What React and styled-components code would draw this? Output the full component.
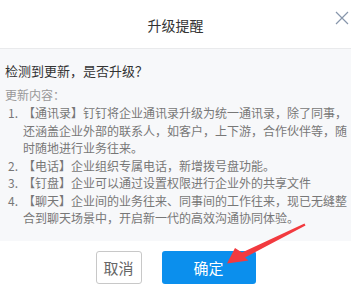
import styled, { createGlobalStyle } from 'styled-components';

const GlobalStyle = createGlobalStyle`
  html, body {
    margin: 0;
    padding: 0;
    background: #ffffff;
  }
  body {
    font-family: "Noto Sans CJK SC", "Liberation Sans", sans-serif;
  }
`;

const items = [
  '【通讯录】钉钉将企业通讯录升级为统一通讯录，除了同事，还涵盖企业外部的联系人，如客户，上下游，合作伙伴等，随时随地进行业务往来。',
  '【电话】企业组织专属电话，新增拨号盘功能。',
  '【钉盘】企业可以通过设置权限进行企业外的共享文件',
  '【聊天】企业间的业务往来、同事间的工作往来，现已无缝整合到聊天场景中，开启新一代的高效沟通协同体验。',
];

export default function App() {
  return (
    <>
      <GlobalStyle />
      <Dialog>
        <Header>
          <span />
          <Title>升级提醒</Title>
          <CloseButton aria-label="关闭">
            <svg width="14" height="14" viewBox="0 0 14 14">
              <path d="M1 1 L13 13 M13 1 L1 13" stroke="#8796ab" strokeWidth="1.2" fill="none" />
            </svg>
          </CloseButton>
        </Header>

        <Body>
          <Question>检测到更新，是否升级？</Question>
          <Label>更新内容：</Label>
          <List>
            {items.map((text, i) => (
              <Item key={i}>
                <Num>{i + 1}.</Num>
                <ItemText>{text}</ItemText>
              </Item>
            ))}
          </List>
        </Body>

        <Footer>
          <CancelButton>取消</CancelButton>
          <ConfirmButton>确定</ConfirmButton>
        </Footer>

        {/* 红色标注箭头 */}
        <Arrow width="351" height="292" viewBox="0 0 351 292">
          <polygon
            points="227,263.5 235,248 242,252.5 304.5,223.5 305.5,225.5 245,257.5 248.5,260.5"
            fill="#f23a3f"
          />
        </Arrow>
      </Dialog>
    </>
  );
}

const Dialog = styled.div`
  position: relative;
  width: 351px;
  height: 292px;
  display: flex;
  flex-direction: column;
  background: #fff;
  overflow: hidden;
`;

const Header = styled.div`
  height: 48px;
  border-bottom: 1px solid #e9eaec;
  display: grid;
  grid-template-columns: 1fr auto 1fr;
  align-items: center;
`;

const Title = styled.div`
  font-size: 14px;
  color: #333;
  line-height: 20px;
  margin-top: 2px;
`;

const CloseButton = styled.div`
  justify-self: end;
  align-self: start;
  margin-top: 11px;
  margin-right: 2px;
  width: 14px;
  height: 14px;
  display: flex;
`;

const Body = styled.div`
  background: #f7f8fa;
  height: 192px;
  box-sizing: border-box;
  padding: 11px 0 0 5px;
`;

const Question = styled.div`
  font-size: 13px;
  line-height: 22px;
  color: #333;
`;

const Label = styled.div`
  margin-top: 4px;
  font-size: 12px;
  line-height: 18px;
  color: #999;
`;

const List = styled.div`
  display: flex;
  flex-direction: column;
`;

const Item = styled.div`
  display: flex;
  font-size: 12px;
  line-height: 17.5px;
  color: #777;
`;

const Num = styled.span`
  width: 18px;
  padding-left: 3px;
  box-sizing: border-box;
  flex-shrink: 0;
  color: #777;
`;

const ItemText = styled.span`
  width: 325px;
`;

const Footer = styled.div`
  flex: 1;
  display: flex;
  justify-content: center;
  align-items: flex-start;
  gap: 20px;
  padding-top: 10px;
`;

const BaseButton = styled.div`
  height: 33px;
  box-sizing: border-box;
  border-radius: 3px;
  display: flex;
  align-items: center;
  justify-content: center;
  font-size: 15px;
`;

const CancelButton = styled(BaseButton)`
  width: 46px;
  border: 1px solid #c8c8c8;
  color: #666;
  background: #fff;
`;

const ConfirmButton = styled(BaseButton)`
  width: 94px;
  background: #0b8fed;
  color: #fff;
`;

const Arrow = styled.svg`
  position: absolute;
  left: 0;
  top: 0;
  pointer-events: none;
`;
